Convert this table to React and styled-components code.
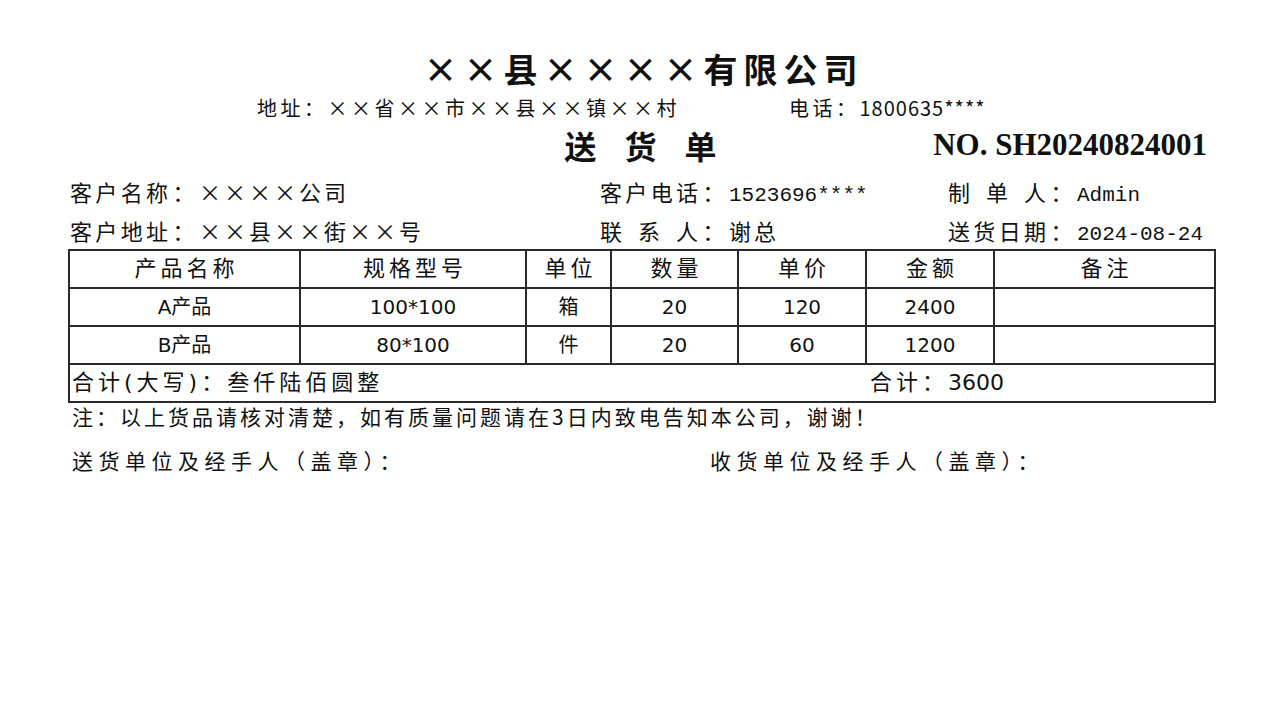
import React from "react";
import styled, { createGlobalStyle } from "styled-components";

const GlobalStyle = createGlobalStyle`
    html, body {
        margin: 0;
        padding: 0;
        background: #ffffff;
    }
    body {
        font-family: "Noto Sans CJK SC", "Noto Sans", sans-serif;
        color: #111111;
    }
`;

const cjk = `"Noto Sans CJK SC", "Noto Sans", sans-serif`;
const mono = `"Liberation Mono", "Noto Sans CJK SC", monospace`;
const tableFont = `"DejaVu Sans", "Noto Sans CJK SC", sans-serif`;

const Page = styled.div`
    width: 1280px;
    height: 720px;
    background: #ffffff;
    box-sizing: border-box;
    padding: 44px 67px 0 68px;
    display: flex;
    flex-direction: column;
`;

const CompanyTitle = styled.div`
    font-family: ${cjk};
    font-size: 34px;
    font-weight: 700;
    letter-spacing: 6px;
    text-align: center;
    line-height: 49px;
    padding-left: 6px;
`;

const AddressLine = styled.div`
    display: flex;
    padding-left: 189px;
    font-family: ${cjk};
    font-size: 20px;
    line-height: 29px;
    letter-spacing: 3.5px;
`;

const Address = styled.span`
    width: 532px;
`;

const Digits = styled.span`
    letter-spacing: ${(p) => p.$spacing || 0}px;
`;

const DocRow = styled.div`
    display: grid;
    grid-template-columns: 1fr auto 1fr;
    align-items: center;
    height: 52px;
    margin-top: -3px;
`;

const DocTitle = styled.div`
    grid-column: 2;
    font-family: ${cjk};
    font-size: 32px;
    font-weight: 700;
    letter-spacing: 28px;
    padding-left: 28px;
`;

const DocNo = styled.div`
    justify-self: end;
    padding-right: 6px;
    font-family: "Liberation Serif", serif;
    font-size: 31px;
    font-weight: 700;
    white-space: pre;
`;

const InfoGrid = styled.div`
    display: grid;
    grid-template-columns: 530px 348px 1fr;
    grid-auto-rows: 39px;
    align-items: center;
    padding-left: 2px;
    margin-top: 0;
`;

const InfoItem = styled.div`
    display: flex;
    align-items: baseline;
    white-space: nowrap;
`;

const Label = styled.span`
    display: inline-block;
    width: 98px;
    font-family: ${cjk};
    font-size: 22px;
    text-align: justify;
    text-align-last: justify;
`;

const Colon = styled.span`
    display: inline-block;
    font-family: ${cjk};
    font-size: 22px;
    width: 31px;
    text-align: center;
`;

const Value = styled.span`
    font-family: ${(p) => (p.$mono ? mono : cjk)};
    font-size: ${(p) => (p.$mono ? 21 : 22)}px;
    letter-spacing: ${(p) => (p.$mono ? "0" : "3px")};
`;

const Table = styled.table`
    border-collapse: collapse;
    width: 1146px;
    table-layout: fixed;
    margin-top: 0;
    font-family: ${tableFont};
    font-size: 20px;
`;

const Cell = styled.td`
    border: 2px solid #2a2a2a;
    height: 36px;
    padding: 0;
    text-align: center;
    line-height: 36px;
    white-space: nowrap;
`;

const HeadCell = styled(Cell).attrs({ as: "th" })`
    font-weight: 400;
    font-size: 22px;
    letter-spacing: 4px;
    padding-left: 4px;
`;

const TotalCell = styled(Cell)`
    text-align: left;
    padding-left: 2px;
`;

const TotalInner = styled.div`
    display: flex;
    font-size: 22px;
    letter-spacing: 4px;
`;

const UpperAmount = styled.span`
    width: 798px;
`;

const Note = styled.div`
    font-family: ${cjk};
    font-size: 21px;
    line-height: 28px;
    padding-left: 4px;
    margin-top: -1px;
    letter-spacing: 3px;
`;

const SignRow = styled.div`
    display: grid;
    grid-template-columns: 638px 1fr;
    padding-left: 4px;
    margin-top: 16px;
    font-family: ${cjk};
    font-size: 21px;
    line-height: 28px;
    letter-spacing: 5.5px;
`;

const COLUMNS = [
    { title: "产品名称", width: 231 },
    { title: "规格型号", width: 226 },
    { title: "单位", width: 85 },
    { title: "数量", width: 127 },
    { title: "单价", width: 128 },
    { title: "金额", width: 128 },
    { title: "备注", width: 221 }
];

const ROWS = [
    ["A产品", "100*100", "箱", "20", "120", "2400", ""],
    ["B产品", "80*100", "件", "20", "60", "1200", ""]
];

const INFO = [
    { label: "客户名称", value: "××××公司" },
    { label: "客户电话", value: "1523696****", mono: true },
    { label: "制单人", value: "Admin", mono: true },
    { label: "客户地址", value: "××县××街××号" },
    { label: "联系人", value: "谢总" },
    { label: "送货日期", value: "2024-08-24", mono: true }
];

function App() {
    return (
        <Page>
            <GlobalStyle />
            <CompanyTitle>××县××××有限公司</CompanyTitle>
            <AddressLine>
                <Address>地址：××省××市××县××镇××村</Address>
                <span>
                    电话：<Digits $spacing={1}>1800635****</Digits>
                </span>
            </AddressLine>
            <DocRow>
                <DocTitle>送货单</DocTitle>
                <DocNo>NO. SH20240824001</DocNo>
            </DocRow>
            <InfoGrid>
                {INFO.map((item) => (
                    <InfoItem key={item.label}>
                        <Label>{item.label}</Label>
                        <Colon>：</Colon>
                        <Value $mono={item.mono}>{item.value}</Value>
                    </InfoItem>
                ))}
            </InfoGrid>
            <Table>
                <colgroup>
                    {COLUMNS.map((col) => (
                        <col key={col.title} style={{ width: col.width }} />
                    ))}
                </colgroup>
                <thead>
                    <tr>
                        {COLUMNS.map((col) => (
                            <HeadCell key={col.title}>{col.title}</HeadCell>
                        ))}
                    </tr>
                </thead>
                <tbody>
                    {ROWS.map((row) => (
                        <tr key={row[0]}>
                            {row.map((value, index) => (
                                <Cell key={index}>{value}</Cell>
                            ))}
                        </tr>
                    ))}
                    <tr>
                        <TotalCell colSpan={7}>
                            <TotalInner>
                                <UpperAmount>合计(大写)：叁仟陆佰圆整</UpperAmount>
                                <span>
                                    合计：<Digits>3600</Digits>
                                </span>
                            </TotalInner>
                        </TotalCell>
                    </tr>
                </tbody>
            </Table>
            <Note>注：以上货品请核对清楚，如有质量问题请在3日内致电告知本公司，谢谢！</Note>
            <SignRow>
                <span>送货单位及经手人（盖章）：</span>
                <span>收货单位及经手人（盖章）：</span>
            </SignRow>
        </Page>
    );
}

export default App;
